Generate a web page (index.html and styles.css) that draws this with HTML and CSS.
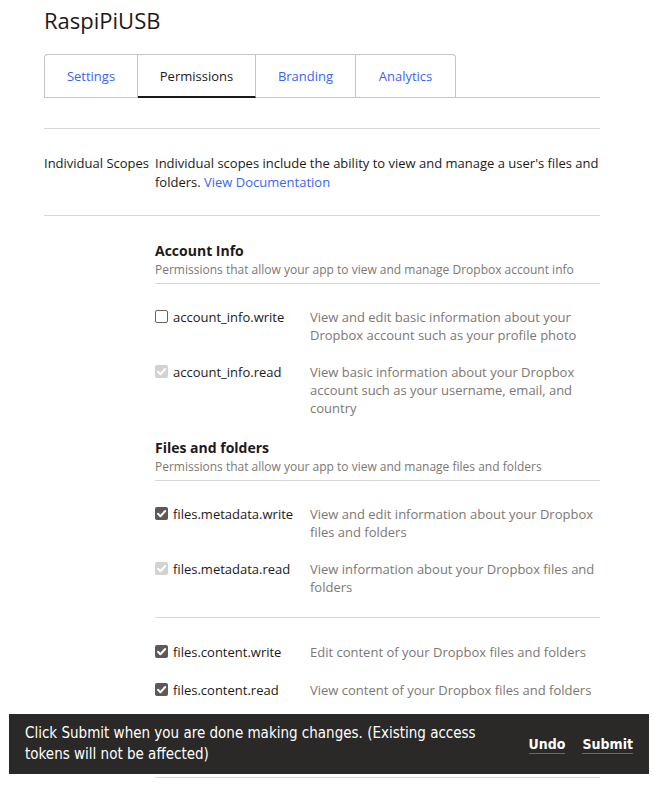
FILE: index.html
```html
<!DOCTYPE html>
<html>
<head>
<meta charset="utf-8">
<link rel="stylesheet" href="styles.css">
</head>
<body>
<div class="page">
  <h1 class="title">RaspiPiUSB</h1>
  <div class="tabbar">
    <div class="tabs">
      <a class="tab tab-first">Settings</a>
      <a class="tab tab-active">Permissions</a>
      <a class="tab">Branding</a>
      <a class="tab tab-last">Analytics</a>
    </div>
  </div>
  <div class="scopes">
    <div class="scopes-label">Individual Scopes</div>
    <div class="scopes-text">Individual scopes include the ability to view and manage a user's files and folders. <a class="link">View Documentation</a></div>
  </div>
  <div class="groups">
    <section class="group">
      <div class="group-head">
        <div class="group-title">Account Info</div>
        <div class="group-sub">Permissions that allow your app to view and manage Dropbox account info</div>
      </div>
      <div class="row">
        <div class="scope"><span class="cb cb-off"></span><span>account_info.write</span></div>
        <div class="desc">View and edit basic information about your Dropbox account such as your profile photo</div>
      </div>
      <div class="row">
        <div class="scope"><span class="cb cb-dis"><svg viewBox="0 0 13 13"><path d="M3 6.8l2.4 2.4L10.2 4" /></svg></span><span>account_info.read</span></div>
        <div class="desc">View basic information about your Dropbox account such as your username, email, and country</div>
      </div>
    </section>
    <section class="group">
      <div class="group-head">
        <div class="group-title">Files and folders</div>
        <div class="group-sub">Permissions that allow your app to view and manage files and folders</div>
      </div>
      <div class="row">
        <div class="scope"><span class="cb cb-on"><svg viewBox="0 0 13 13"><path d="M3 6.8l2.4 2.4L10.2 4" /></svg></span><span>files.metadata.write</span></div>
        <div class="desc">View and edit information about your Dropbox files and folders</div>
      </div>
      <div class="row">
        <div class="scope"><span class="cb cb-dis"><svg viewBox="0 0 13 13"><path d="M3 6.8l2.4 2.4L10.2 4" /></svg></span><span>files.metadata.read</span></div>
        <div class="desc">View information about your Dropbox files and folders</div>
      </div>
      <div class="divider"></div>
      <div class="row">
        <div class="scope"><span class="cb cb-on"><svg viewBox="0 0 13 13"><path d="M3 6.8l2.4 2.4L10.2 4" /></svg></span><span>files.content.write</span></div>
        <div class="desc">Edit content of your Dropbox files and folders</div>
      </div>
      <div class="row">
        <div class="scope"><span class="cb cb-on"><svg viewBox="0 0 13 13"><path d="M3 6.8l2.4 2.4L10.2 4" /></svg></span><span>files.content.read</span></div>
        <div class="desc">View content of your Dropbox files and folders</div>
      </div>
      <div class="divider divider-end"></div>
    </section>
  </div>
</div>
<div class="snackbar">
  <div class="snack-text">Click Submit when you are done making changes. (Existing access tokens will not be affected)</div>
  <div class="snack-actions">
    <a class="snack-btn">Undo</a>
    <a class="snack-btn">Submit</a>
  </div>
</div>
</body>
</html>
```

FILE: styles.css
```css
* { box-sizing: border-box; }
html, body { margin: 0; padding: 0; background: #fff; }
body {
  font-family: "Open Sans", "Noto Sans", sans-serif;
  color: #1e1919;
  font-size: 13px;
  overflow: hidden;
  height: 785px;
}
.page {
  width: 556px;
  margin-left: 44px;
  padding-top: 5px;
}
.title {
  margin: 0;
  font-size: 22px;
  font-weight: 400;
  line-height: 30px;
  color: #1e1919;
}
.tabbar {
  margin-top: 19px;
  border-bottom: 1px solid #c7c4c0;
}
.tabs {
  display: flex;
}
.tab {
  display: flex;
  align-items: center;
  justify-content: center;
  height: 43px;
  border: 1px solid #c7c4c0;
  border-bottom: none;
  border-left: none;
  color: #3c64f4;
  font-size: 13px;
  margin-bottom: -1px;
  padding-bottom: 1px;
}
.tab-first { width: 94px; border-left: 1px solid #c7c4c0; border-top-left-radius: 4px; }
.tab-active { width: 118px; color: #1e1919; border-bottom: 2px solid #1e1919; padding-bottom: 0; padding-top: 0; height: 44px; }
.tab:nth-child(3) { width: 100px; }
.tab-last { width: 100px; border-top-right-radius: 4px; }
.scopes {
  margin-top: 30px;
  border-top: 1px solid #d9d6d3;
  border-bottom: 1px solid #d9d6d3;
  display: flex;
  padding: 25px 0 23px;
  line-height: 19px;
}
.scopes-label { width: 111px; flex: none; }
.scopes-text { flex: 1; }
.link { color: #3c64f4; }
.groups { margin-left: 111px; padding-top: 25px; }
.group-head {
  border-bottom: 1px solid #d9d6d3;
  padding-bottom: 5px;
}
.group-title { font-weight: 700; font-size: 14px; line-height: 20px; }
.group-sub { font-size: 12px; color: #7d7773; line-height: 17px; }
.group + .group { margin-top: 12px; }
.group .group-head + .row { margin-top: 14px; }
.row {
  display: flex;
  padding: 10px 0 9px;
  line-height: 18px;
}
.scope {
  width: 155px;
  flex: none;
  display: flex;
  align-items: flex-start;
}
.desc { color: #7d7773; flex: 1; }
.cb {
  width: 13px;
  height: 13px;
  border-radius: 2px;
  margin: 2px 5px 0 0;
  flex: none;
  display: flex;
}
.cb svg { width: 13px; height: 13px; }
.cb path { fill: none; stroke: #fff; stroke-width: 2; stroke-linecap: round; stroke-linejoin: round; }
.cb-off { border: 1px solid #6b6661; background: #fff; }
.cb-on { background: #5e5955; }
.cb-dis { background: #d4d2cf; }
.divider { border-top: 1px solid #d9d6d3; margin: 12px 0 15px; }
.divider + .row + .row { padding-top: 11px; }
.divider-end { margin: 69px 0 0; }
.snackbar {
  position: fixed;
  left: 9px;
  top: 714px;
  width: 640px;
  height: 60px;
  background: #2a2927;
  color: #fff;
  display: flex;
  align-items: center;
  padding: 0 16px;
  font-family: "Liberation Sans Narrow", "DejaVu Sans Condensed", "Roboto Condensed", "Roboto", sans-serif;
  font-size: 15px;
}
.snack-text { flex: 1; line-height: 21px; padding-right: 40px; }
.snack-actions { display: flex; gap: 17px; }
.snack-btn {
  font-weight: 700;
  font-size: 14px;
  border-bottom: 1px solid #6b6864;
  line-height: 18px;
}
```
